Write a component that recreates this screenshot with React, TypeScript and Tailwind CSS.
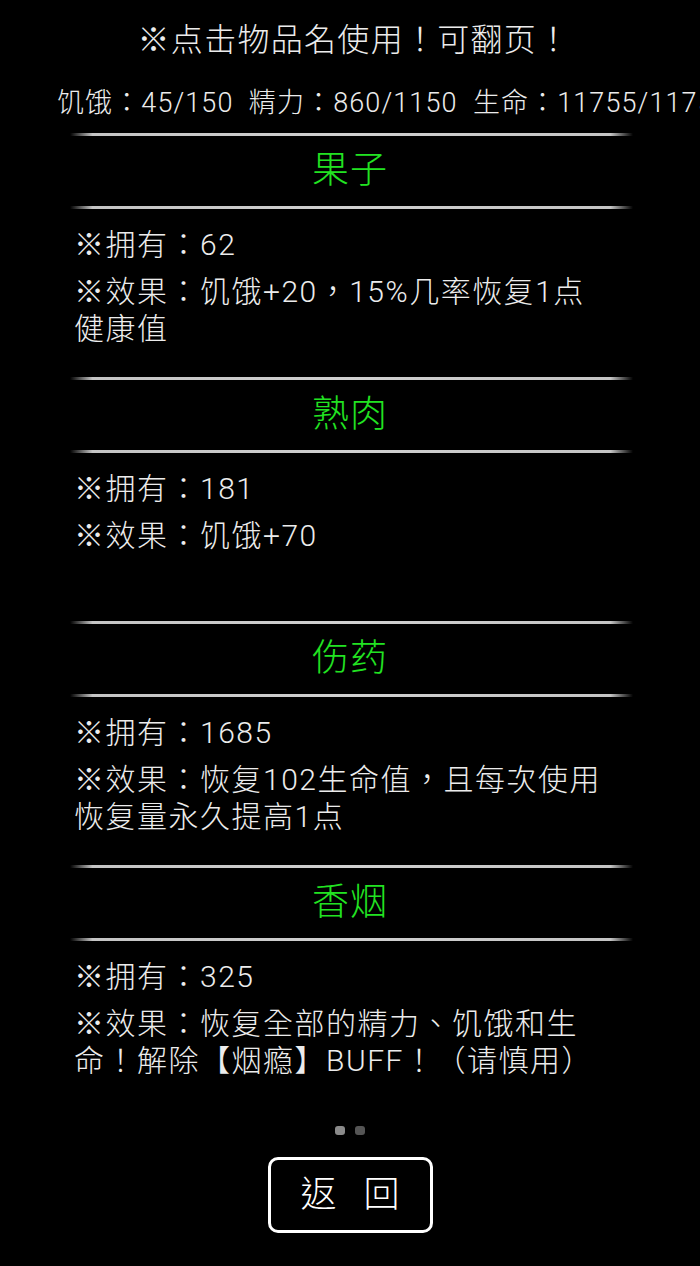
const items = [
  { name: "果子", own: 62, effect: ["※效果：饥饿+20，15%几率恢复1点", "健康值"] },
  { name: "熟肉", own: 181, effect: ["※效果：饥饿+70"] },
  { name: "伤药", own: 1685, effect: ["※效果：恢复102生命值，且每次使用", "恢复量永久提高1点"] },
  { name: "香烟", own: 325, effect: ["※效果：恢复全部的精力、饥饿和生", "命！解除【烟瘾】BUFF！（请慎用）"] },
];

const font = { fontFamily: 'Roboto, "Noto Sans CJK TC", "Noto Sans CJK SC", sans-serif' };

const Divider = () => (
  <div className="ml-[70px] h-[3px] w-[563px] bg-[linear-gradient(to_right,transparent,#c4c4c4_4%,#d0d0d0_50%,#c4c4c4_96%,transparent)]" />
);

const App = () => {
  return (
    <div className="w-[700px] h-[1266px] overflow-hidden bg-black text-[#ececec] font-light" style={font}>
      <div className="h-[80px] flex items-center justify-center pl-[8px] text-[32px] tracking-[1.3px]">
        ※点击物品名使用！可翻页！
      </div>
      <div className="h-[46px] flex items-center pl-[57px] text-[27px] tracking-[1.1px] whitespace-nowrap overflow-hidden">
        饥饿：45/150&nbsp;&nbsp;精力：860/1150&nbsp;&nbsp;生命：11755/11755
      </div>

      <div className="mt-[7px] flex flex-col">
        {items.map((item) => (
          <section key={item.name} className="h-[244px]">
            <Divider />
            <div className="h-[70px] flex items-center justify-center text-[37px] tracking-[1px] text-[#22e322]">
              {item.name}
            </div>
            <Divider />
            <div className="h-[168px] pl-[74px] pt-[17px] text-[30px] leading-[37px] tracking-[1.5px] whitespace-nowrap flex flex-col gap-[10px]">
              <p>※拥有：{item.own}</p>
              <p>
                {item.effect.map((line) => (
                  <span key={line} className="block">{line}</span>
                ))}
              </p>
            </div>
          </section>
        ))}
      </div>

      <div className="mt-[17px] flex justify-center gap-[10px]">
        <span className="w-[10px] h-[9px] rounded-[3px] bg-[#8a8a8a]" />
        <span className="w-[10px] h-[9px] rounded-[3px] bg-[#555]" />
      </div>

      <div className="mt-[22px] flex justify-center">
        <button className="w-[165px] h-[76px] border-[3px] border-white rounded-[10px] text-[36px] text-white font-light flex items-center justify-center gap-[27px]">
          <span>返</span>
          <span>回</span>
        </button>
      </div>
    </div>
  );
};

export default App;
